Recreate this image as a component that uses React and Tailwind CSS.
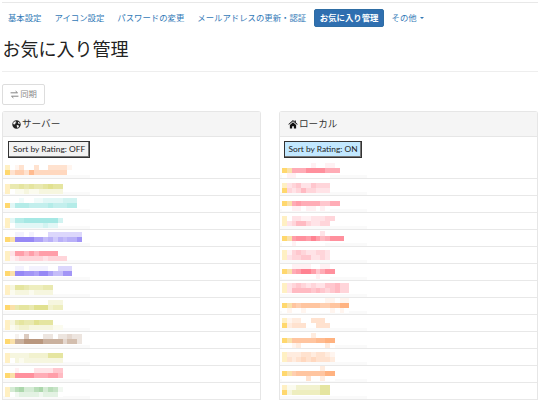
const HUES = {
  o: [255, 168, 112], l: [216, 216, 112], t: [120, 220, 214], p: [150, 136, 245],
  r: [255, 130, 145], b: [176, 138, 110], g: [130, 195, 130],
};
const cellColor = (hue, ch) => {
  if (ch === 'Y') return 'rgb(255,216,110)';
  if (ch === 'y') return 'rgb(255,240,195)';
  if (ch === 'x') return 'rgb(250,225,170)';
  const n = Number(ch);
  const c = HUES[hue];
  const a = n === 0 ? 0 : n / 9;
  return `rgb(${c.map((v) => Math.round(255 + (v - 255) * a)).join(',')})`;
};
const LEFT = [
  { h: 'o', t: 3, c: ['y0130030033331', 'Y3553744444443'.slice(0, 13)] },
  { h: 'l', t: 5, c: ['y55656556766', 'y01121122222'] },
  { h: 't', t: 2, c: ['000100112222333', 'Y25554444544455'] },
  { h: 't', t: 5, c: ['y25566666663', 'y0222222322'] },
  { h: 'p', t: 2, c: ['0011010003333333', 'Yx99997756465668'] },
  { h: 'r', t: 4, c: ['y2775757777', 'y123333323333'] },
  { h: 'p', t: 2, c: ['00110111100333', 'Yx998879975588'] },
  { h: 'l', t: 4, c: ['y266544455', 'y122212222'] },
  { h: 'l', t: 2, c: ['000000000222', 'Yx5665777344'] },
  { h: 'l', t: 5, c: ['y256557666', 'y12332222211'] },
  { h: 'b', t: 2, c: ['0010400022022322', 'Yx66888866663552'] },
  { h: 'l', t: 4, c: ['y22223333666', 'y02122222222'] },
  { h: 'r', t: 2, c: ['001000222244', 'Yx8888666775'] },
  { h: 'g', t: 4, c: ['y35633563541', 'y01222212220'] },
];
const RIGHT = [
  { h: 'r', t: 1, c: ['000000100110', 'Yx6668888666899', '0110000000'].map((s) => s.slice(0, 12)) },
  { h: 'r', t: 4, c: ['y234224333', 'Y323533222'] },
  { h: 'r', t: 0, c: ['00000000000', 'Yx6766664466', '0011011010'] },
  { h: 'r', t: 3, c: ['y0221122233', 'y235532233'] },
  { h: 'r', t: 1, c: ['000000002000', 'Yx788797568880', '001000000'].map((s) => s.slice(0, 13)) },
  { h: 'r', t: 3, c: ['y134322332', 'y233442232'] },
  { h: 'r', t: 0, c: ['00111100110', 'Yx67997468880', '0000000100'].map((s) => s.slice(0, 11)) },
  { h: 'r', t: 2, c: ['y2343232244533'.slice(0, 15), 'y2555545434533'.slice(0, 15)] },
  { h: 'o', t: 0, c: ['000000000110110', 'Yx656666556688', '01001000001010'] },
  { h: 'o', t: 3, c: ['y122003330', 'Y233300333'] },
  { h: 'o', t: 1, c: ['000000200000', 'Yx6666677880', '00120000020'] },
  { h: 'o', t: 3, c: ['y22233233210', 'y3234343332'] },
  { h: 'o', t: 0, c: ['0000000020', 'Yx566666688', '00000300200'] },
  { h: 'l', t: 2, c: ['y113333366', 'Y244444466'] },
];

function Mosaic({ h, t, c }) {
  return (
    <div className="relative flex h-[17px] flex-col overflow-hidden border-b border-[#e8e8e8] pl-[2px]">
      <div className="absolute bottom-0 left-0 h-[3px] w-[87px] bg-[#fafafa]" />
      <div style={{ height: t }} className="shrink-0" />
      {c.map((row, i) => (
        <div key={i} className="relative flex h-[5px] shrink-0">
          {row.split('').map((ch, j) => (
            <div key={j} className="h-[5px] w-[4.8px] shrink-0" style={{ backgroundColor: cellColor(h, ch) }} />
          ))}
        </div>
      ))}
    </div>
  );
}

const Globe = () => (
  <svg viewBox="0 0 16 16" className="h-[9px] w-[9px]" fill="#222">
    <path d="M8 .5a7.5 7.5 0 1 0 0 15 7.5 7.5 0 0 0 0-15ZM4 3l2.5-1 1.5 2-2 1v2l-2 1-2-1 .5-2.5ZM8.5 9l3 .5 1 1.5-2 3-1.5-1-.5-2.5Zm3-6 1.5 1.5 1 2-2 .5-1.5-2Z" fillRule="evenodd" />
  </svg>
);
const House = () => (
  <svg viewBox="0 0 16 16" className="h-[10px] w-[10px]" fill="#111">
    <path d="M8 1.5 0.5 8.3 1.5 9.3 8 3.7l6.5 5.6 1-1-3-2.7V2.2h-2v2.1ZM3 9.5V15h3.6v-3.6h2.8V15H13V9.5L8 5.2Z" />
  </svg>
);

const NAV = ['基本設定', 'アイコン設定', 'パスワードの変更', 'メールアドレスの更新・認証'];

function Panel({ icon, title, btn, on, rows }) {
  return (
    <div className="min-w-0 flex-1 rounded-t-[3px] border border-[#e6e6e6] border-b-0">
      <div className={`flex h-[25px] items-center gap-[1px] border-b border-[#e6e6e6] bg-[#f5f5f5] text-[9.6px] text-[#333] ${on ? 'pl-[8px]' : 'pl-[9px]'}`}>
        {icon}
        <span>{title}</span>
      </div>
      <div className={`flex h-[27px] items-start pt-[4px] ${on ? 'pl-[4px]' : 'pl-[5px]'}`}>
        <div className={`flex h-[16.5px] items-center whitespace-nowrap border border-[#333] text-[8.4px] text-[#222] shadow-[inset_-1px_-1px_0_#777] ${on ? 'bg-[#c2e8ff] px-[3.5px]' : 'bg-[#f2f2f2] px-[4px]'}`}>
          {btn}
        </div>
      </div>
      <div className="-mt-[2px]">
        {rows.map((r, i) => (
          <Mosaic key={i} {...r} />
        ))}
      </div>
    </div>
  );
}

export default function App() {
  return (
    <div className="h-[401px] w-[540px] overflow-hidden bg-white text-[#333]" style={{ fontFamily: 'Lato, "Noto Sans CJK JP", sans-serif' }}>
      <div className="mx-[2px] mt-[2px] h-px bg-[#e8e8e8]" />
      <div className="mt-[6px] flex h-[18px] items-center pl-[2px] text-[8.4px] text-[#337ab7]">
        {NAV.map((n) => (
          <span key={n} className="mr-[1px] whitespace-nowrap px-[6px]">{n}</span>
        ))}
        <span className="ml-[1px] flex h-[18px] items-center whitespace-nowrap rounded-[2px] border border-[#2e6da4] bg-[#2f6fb0] px-[4.6px] font-bold text-white">お気に入り管理</span>
        <span className="ml-[1.5px] flex items-center gap-[3px] whitespace-nowrap px-[6px]">
          その他
          <span className="h-0 w-0 border-x-[2.4px] border-t-[2.4px] border-x-transparent border-t-[#337ab7]" />
        </span>
      </div>
      <h1 className="mt-[9px] pl-[2.5px] text-[18px] font-normal leading-[26px] text-[#222]">お気に入り管理</h1>
      <div className="mx-[2px] mt-[9px] h-px bg-[#eeeeee]" />
      <div className="ml-[2px] mt-[12px] flex h-[21px] w-[43px] items-center justify-center gap-[1px] rounded-[2px] border border-[#dddddd] text-[8.4px] text-[#8a8a8a]">
        <svg viewBox="0 0 16 16" className="h-[9px] w-[9px]" fill="none" stroke="#777" strokeWidth="1.6">
          <path d="M1 5h12M10 2l3.5 3M15 11H3M6 14l-3.5-3" />
        </svg>
        同期
      </div>
      <div className="mx-[2px] mt-[6px] flex gap-[18px]">
        <Panel icon={<Globe />} title="サーバー" btn="Sort by Rating: OFF" rows={LEFT} />
        <Panel icon={<House />} title="ローカル" btn="Sort by Rating: ON" on rows={RIGHT} />
      </div>
    </div>
  );
}
